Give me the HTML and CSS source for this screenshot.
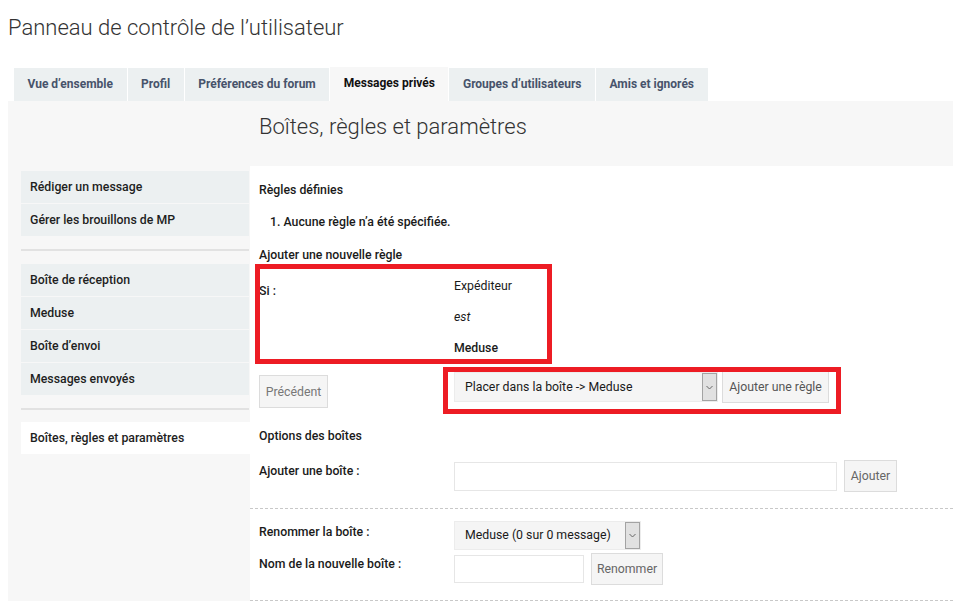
FILE: index.html
```html
<!DOCTYPE html>
<html lang="fr">
<head>
<meta charset="utf-8">
<title>Panneau de contrôle de l’utilisateur</title>
<link rel="stylesheet" href="styles.css">
</head>
<body>
<h1 class="page-title">Panneau de contrôle de l’utilisateur</h1>
<nav class="tabs">
  <a class="tab">Vue d’ensemble</a>
  <a class="tab">Profil</a>
  <a class="tab">Préférences du forum</a>
  <a class="tab active">Messages privés</a>
  <a class="tab">Groupes d’utilisateurs</a>
  <a class="tab">Amis et ignorés</a>
</nav>
<div class="panel">
  <aside class="sidebar">
    <ul class="menu">
      <li class="menu-item">Rédiger un message</li>
      <li class="menu-item">Gérer les brouillons de MP</li>
    </ul>
    <hr class="menu-sep">
    <ul class="menu">
      <li class="menu-item">Boîte de réception</li>
      <li class="menu-item">Meduse</li>
      <li class="menu-item">Boîte d’envoi</li>
      <li class="menu-item">Messages envoyés</li>
    </ul>
    <hr class="menu-sep menu-sep-last">
    <ul class="menu">
      <li class="menu-item active">Boîtes, règles et paramètres</li>
    </ul>
  </aside>
  <main class="main">
    <h2 class="main-title">Boîtes, règles et paramètres</h2>
    <div class="content">
      <h3 class="section-title">Règles définies</h3>
      <ol class="rules-list">
        <li>Aucune règle n’a été spécifiée.</li>
      </ol>
      <h3 class="section-title section-gap">Ajouter une nouvelle règle</h3>
      <div class="rule-def">
        <div class="rule-label">Si :</div>
        <div class="rule-values">
          <div class="rule-value">Expéditeur</div>
          <div class="rule-value"><em>est</em></div>
          <div class="rule-value strong">Meduse</div>
        </div>
      </div>
      <div class="action-row">
        <div class="action-left">
          <button class="btn btn-prev">Précédent</button>
        </div>
        <div class="action-right">
          <div class="select select-action">
            <span class="select-text">Placer dans la boîte -&gt; Meduse</span>
            <span class="select-arrow"><svg width="7" height="5" viewBox="0 0 7 5"><polyline points="0.5,1 3.5,4 6.5,1" fill="none" stroke="#666" stroke-width="1"/></svg></span>
          </div>
          <button class="btn btn-add-rule">Ajouter une règle</button>
        </div>
      </div>
      <h3 class="section-title options-title">Options des boîtes</h3>
      <div class="form-row row-add">
        <label class="form-label">Ajouter une boîte :</label>
        <div class="form-field">
          <input class="text-input input-wide" type="text">
          <button class="btn btn-add">Ajouter</button>
        </div>
      </div>
      <hr class="dashed">
      <div class="form-row row-rename">
        <label class="form-label">Renommer la boîte :</label>
        <div class="form-field">
          <div class="select select-box">
            <span class="select-text">Meduse (0 sur 0 message)</span>
            <span class="select-arrow"><svg width="7" height="5" viewBox="0 0 7 5"><polyline points="0.5,1 3.5,4 6.5,1" fill="none" stroke="#666" stroke-width="1"/></svg></span>
          </div>
        </div>
      </div>
      <div class="form-row row-newname">
        <label class="form-label">Nom de la nouvelle boîte :</label>
        <div class="form-field">
          <input class="text-input input-short" type="text">
          <button class="btn btn-rename">Renommer</button>
        </div>
      </div>
      <hr class="dashed dashed-last">

      <div class="highlight highlight-rule"></div>
      <div class="highlight highlight-action"></div>
    </div>
  </main>
</div>
</body>
</html>
```

FILE: styles.css
```css
html, body {
  height: 100%;
}
body {
  margin: 0;
  padding-left: 8px;
  font-family: Roboto, "Liberation Sans", sans-serif;
  color: #333;
  background: #fff;
  overflow: hidden;
  display: flex;
  flex-direction: column;
}

.page-title {
  margin: 0;
  padding-top: 13px;
  font-size: 22px;
  line-height: 30px;
  font-weight: 300;
  color: #333;
}

.tabs {
  display: flex;
  align-items: flex-end;
  gap: 1px;
  margin: 24px 0 0 6px;
  height: 34px;
}
.tab {
  display: block;
  height: 33px;
  line-height: 33px;
  padding: 0 13.5px;
  background: #ecf0f1;
  color: #47536b;
  font-size: 12px;
  font-weight: 700;
  white-space: nowrap;
}
.tab.active {
  height: 34px;
  line-height: 33px;
  background: #f7f7f7;
  color: #111;
}

.panel {
  flex: 1;
  display: flex;
  background: #f7f7f7;
  padding-left: 13px;
}

.sidebar {
  width: 228px;
  flex: none;
  margin-top: 70px;
}
.menu {
  list-style: none;
  margin: 0;
  padding: 0;
  display: flex;
  flex-direction: column;
  gap: 1px;
}
.menu-item {
  height: 32px;
  line-height: 33px;
  padding-left: 9px;
  background: #ecf0f1;
  font-size: 12.3px;
  font-weight: 500;
  color: #1e1e1e;
  white-space: nowrap;
}
.menu-item.active {
  background: #fff;
  margin-right: -1px;
}
.menu-sep {
  border: 0;
  border-top: 2px solid #e2e2e2;
  margin: 13px 0;
  height: 0;
}
.menu-sep-last {
  margin: 13px 0 12px;
}

.main {
  flex: 1;
  margin-left: 1px;
  display: flex;
  flex-direction: column;
}
.main-title {
  margin: 0;
  padding: 12px 0 25px 9px;
  font-size: 22px;
  line-height: 28px;
  font-weight: 300;
  color: #333;
}

.content {
  position: relative;
  flex: 1;
  background: #fff;
  padding: 15px 0 0 9px;
  font-size: 12.3px;
  line-height: 19px;
}

.section-title {
  margin: 0;
  font-size: 12.3px;
  line-height: 19px;
  font-weight: 500;
  color: #1a1a1a;
}
.section-gap {
  margin-top: 14px;
}
.rules-list {
  margin: 13px 0 0;
  padding: 0 0 0 11px;
  list-style-position: inside;
  font-weight: 500;
  color: #1a1a1a;
}

.rule-def {
  display: flex;
  margin-top: 12px;
}
.rule-label {
  width: 195px;
  flex: none;
  padding-top: 5px;
  font-weight: 500;
  color: #1a1a1a;
}
.rule-values {
  display: flex;
  flex-direction: column;
  gap: 12px;
}
.rule-value {
  color: #1a1a1a;
}
.rule-value.strong {
  font-weight: 500;
}

.action-row {
  display: flex;
  align-items: flex-start;
  margin-top: 13px;
}
.action-left {
  width: 195px;
  flex: none;
  padding-top: 4px;
}
.action-right {
  display: flex;
  align-items: flex-start;
  gap: 4px;
}

.btn {
  font-family: inherit;
  font-size: 12.3px;
  color: #666;
  background: #f5f5f5;
  border: 1px solid #dcdcdc;
  padding: 0 4px;
  margin: 0;
  box-sizing: border-box;
  white-space: nowrap;
}
.btn-prev {
  width: 69px;
  height: 33px;
  color: #777;
}
.btn-add-rule {
  width: 107px;
  height: 32px;
  color: #555;
}
.btn-add {
  width: 53px;
  height: 32px;
}
.btn-rename {
  width: 72px;
  height: 32px;
}

.select {
  position: relative;
  box-sizing: border-box;
  display: flex;
  align-items: center;
  background: #f5f5f5;
  border: 1px solid #ececec;
  color: #1a1a1a;
  font-size: 12.3px;
}
.select-action {
  width: 264px;
  height: 30px;
  margin-top: 1px;
}
.select-box {
  width: 187px;
  height: 29px;
}
.select-text {
  padding-left: 10px;
  white-space: nowrap;
}
.select-arrow {
  margin-left: auto;
  align-self: stretch;
  width: 15px;
  box-sizing: border-box;
  background: #e1e1e1;
  border: 1px solid #a3a3a3;
  display: flex;
  align-items: center;
  justify-content: center;
}

.options-title {
  margin-top: 19px;
}

.form-row {
  display: flex;
  align-items: flex-start;
}
.form-label {
  width: 195px;
  flex: none;
  margin-top: 2px;
  font-weight: 500;
  color: #1a1a1a;
}
.form-field {
  display: flex;
  align-items: flex-start;
  gap: 7px;
}
.row-add {
  margin-top: 14px;
}
.row-rename {
  margin-top: 12px;
}
.row-newname {
  margin-top: 3px;
}

.text-input {
  box-sizing: border-box;
  margin: 2px 0 0;
  padding: 0 6px;
  border: 1px solid #e6e6e6;
  background: #fff;
  font-family: inherit;
  font-size: 12.3px;
}
.input-wide {
  width: 383px;
  height: 29px;
}
.input-short {
  width: 130px;
  height: 28px;
}

.dashed {
  border: 0;
  border-top: 1px dashed #c8c8c8;
  height: 0;
  margin: 16px 0 0 -9px;
}
.dashed-last {
  margin-top: 15px;
}

.highlight {
  position: absolute;
  box-sizing: border-box;
  border: 5px solid #ed1c24;
  pointer-events: none;
}
.highlight-rule {
  left: 5px;
  top: 98px;
  width: 297px;
  height: 100px;
}
.highlight-action {
  left: 193px;
  top: 201px;
  width: 398px;
  height: 47px;
}
```
